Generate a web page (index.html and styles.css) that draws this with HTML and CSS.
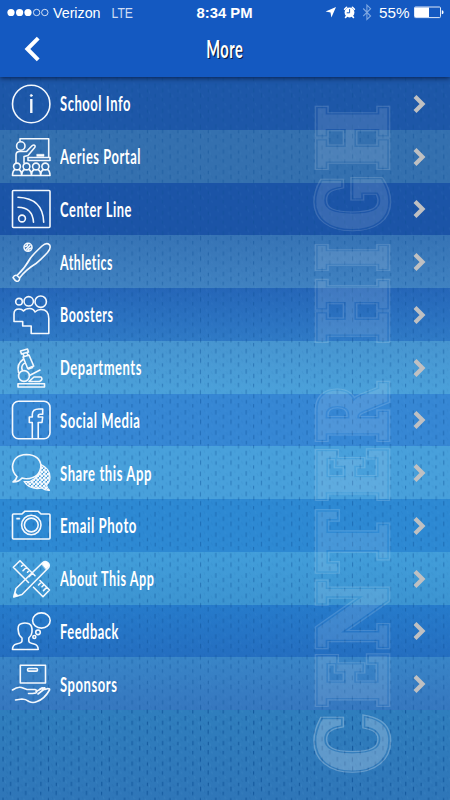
FILE: index.html
```
<!DOCTYPE html>
<html lang="en">
<head>
<meta charset="utf-8">
<title>More</title>
<link rel="stylesheet" href="styles.css">
</head>
<body>
<main class="screen">
  <header class="header">
    <div class="status">
      <svg class="status-art" viewBox="0 0 450 25">
        <g fill="#fff"><circle cx="11" cy="12.5" r="3.6"/><circle cx="19.6" cy="12.5" r="3.6"/><circle cx="28" cy="12.5" r="3.6"/></g>
        <g fill="none" stroke="#fff" stroke-width=".8"><circle cx="36.6" cy="12.5" r="3.2"/><circle cx="44.8" cy="12.5" r="3.2"/></g>
        <g class="status-text">
          <text x="53" y="17.5" textLength="47.5">Verizon</text>
          <text class="thin" x="111.5" y="17.5" textLength="21.5" lengthAdjust="spacingAndGlyphs">LTE</text>
          <text class="strong" x="196.5" y="17.5" textLength="56" lengthAdjust="spacingAndGlyphs">8:34 PM</text>
          <text x="379" y="17.5" textLength="30.5" lengthAdjust="spacingAndGlyphs">55%</text>
        </g>
        <path fill="#fff" d="M336 7l-4.6 10.4-.9-4.9-4.9-.9z"/>
        <g fill="none" stroke="#fff" stroke-linecap="round">
          <circle cx="349.5" cy="12.5" r="4.9" fill="#fff" stroke="none"/>
          <path stroke-width="1.6" d="M344.6 9.3l2-2M354.4 9.3l-2-2M346.3 16.6l-.8.9M352.7 16.6l.8.9"/>
          <path stroke="#1459c1" stroke-width="1" d="M349.6 9.5v3.3h-2.500"/>
        </g>
        <path fill="none" stroke="#7fa8e2" stroke-width="1.1" d="M363.2 8.5l7.4 7.5-3.7 3.5V5l3.7 3.7-7.4 7.4"/>
        <rect x="414.5" y="7" width="26" height="10.6" rx="1" fill="none" stroke="#dfe9f8"/>
        <path fill="#fff" d="M415 7.5h14v9.6h-14zM441.8 10.3q1.8 0 1.8 2t-1.8 2z"/>
      </svg>
    </div>
    <div class="nav">
      <svg class="nav-art" viewBox="0 0 450 52">
        <path fill="none" stroke="#fff" stroke-width="4" d="M38.2 13.2L27.4 24l10.8 10.8"/>
        <text class="title title-shadow" x="207.4" y="34.2" textLength="37" lengthAdjust="spacingAndGlyphs" aria-hidden="true">More</text>
        <text class="title" x="206.2" y="33" textLength="37" lengthAdjust="spacingAndGlyphs">More</text>
      </svg>
    </div>
  </header>

  <svg class="artwork" viewBox="0 0 450 800" aria-hidden="true">
    <defs>
      <pattern id="mesh" width="30.4" height="20.4" patternUnits="userSpaceOnUse">
        <path class="mesh-dark" d="M3 2v4.5M3.2 12.5v3.5M10.6 6.5v4.5M10.4 16.5v3.5M18 2.5v4.5M18.2 11.5v4.5M25.9 7.5v3.5M25.7 15.5v4.5"/>
        <path class="mesh-soft" d="M6 1l1.5 3M6 9l1 3M6.5 16l1.5 3M13.5 4l1.5 3M14 13l1 3M21.5 1l1 3M21 9l1.5 3M22 16l1 2M28.5 4l1.5 3M28.5 12l1.5 3"/>
        <path class="mesh-light" d="M4.6 5l1 3M8.6 12l1 3M12 1l1 3M16 8l1 3M20 13l1 3M23.7 3l1 3M27.5 9l.6 3M29 17l1 2"/>
      </pattern>
      <g id="l-c" transform="translate(385.5 772.5) rotate(-90)"><text textLength="57.500" lengthAdjust="spacingAndGlyphs">C</text></g>
      <g id="l-rest">
        <g transform="translate(385.5 707) rotate(-90)"><text textLength="54" lengthAdjust="spacingAndGlyphs">E</text></g>
        <g transform="translate(385.5 649) rotate(-90)"><text textLength="69" lengthAdjust="spacingAndGlyphs">N</text></g>
        <g transform="translate(385.5 571) rotate(-90)"><text textLength="59" lengthAdjust="spacingAndGlyphs">T</text></g>
        <g transform="translate(385.5 501) rotate(-90)"><text textLength="53" lengthAdjust="spacingAndGlyphs">E</text></g>
        <g transform="translate(385.5 442) rotate(-90)"><text textLength="57.500" lengthAdjust="spacingAndGlyphs">R</text></g>
        <g transform="translate(385.5 343) rotate(-90)"><text textLength="64" lengthAdjust="spacingAndGlyphs">H</text></g>
        <g transform="translate(385.5 271) rotate(-90)"><text textLength="27" lengthAdjust="spacingAndGlyphs">I</text></g>
        <g transform="translate(385.5 231) rotate(-90)"><text textLength="56" lengthAdjust="spacingAndGlyphs">G</text></g>
        <g transform="translate(385.5 170) rotate(-90)"><text textLength="64" lengthAdjust="spacingAndGlyphs">H</text></g>
      </g>
      <mask id="m-c" maskUnits="userSpaceOnUse" x="0" y="0" width="450" height="800">
        <use href="#l-c" class="ring-out"/><use href="#l-c" class="ring-gap"/><use href="#l-c" class="core"/>
      </mask>
      <mask id="m-rest" maskUnits="userSpaceOnUse" x="0" y="0" width="450" height="800">
        <use href="#l-rest" class="ring-out"/><use href="#l-rest" class="ring-gap"/><use href="#l-rest" class="core"/>
      </mask>
    </defs>
    <rect y="77" width="450" height="633" fill="url(#mesh)" opacity=".6"/>
    <rect y="710" width="450" height="90" fill="url(#mesh)"/>
    <rect width="450" height="800" fill="#fff" opacity=".14" mask="url(#m-rest)"/>
    <rect width="450" height="800" fill="#fff" opacity=".27" mask="url(#m-c)"/>
  </svg>

  <div class="list">
    <div class="row r1"><svg class="icon" viewBox="0 0 40 40"><circle cx="20.2" cy="20" r="18.7"/><path stroke-width="2.4" stroke-linecap="butt" d="M20.3 15v14"/><circle class="solid" cx="20.3" cy="11.500" r="1.1"/></svg><svg class="label" viewBox="0 0 160 30"><text textLength="71" lengthAdjust="spacingAndGlyphs" y="22">School Info</text></svg><svg class="go" viewBox="0 0 14 20"><path d="M2 2.5L9.5 10 2 17.5"/></svg></div>
    <div class="row r2"><svg class="icon" viewBox="0 0 40 40"><path d="M9 4V1.8h28.7V20.5M17 20.5h22v3H17zM5 26V18q0-3.5 3.5-3.5h7L21 8.800q2-1.500 3 0 .5 1-.5 2L17 18.500l-4 1V26"/><path class="solid" d="M26 17.300h7v2h-7z"/><circle cx="9.800" cy="9" r="4.200"/><path d="M4 32.500q-2.500 1.500-2.500 6h37.500q0-4.500-2.500-6M8 32.500q2.500 1.500 2.700 5.500 0-4 2.700-5.500M18 32.500q2.300 1.500 2.500 5.500 0-4 2.500-5.500M27 32.500q2.700 1.500 2.700 5.500 0-4 2.700-5.500"/><circle cx="6" cy="29.500" r="3.400"/><circle cx="15.500" cy="29.500" r="3.400"/><circle cx="25" cy="29.500" r="3.400"/><circle cx="34.300" cy="29.500" r="3.400"/></svg><svg class="label" viewBox="0 0 160 30"><text textLength="81" lengthAdjust="spacingAndGlyphs" y="22">Aeries Portal</text></svg><svg class="go" viewBox="0 0 14 20"><path d="M2 2.5L9.5 10 2 17.5"/></svg></div>
    <div class="row r3"><svg class="icon" viewBox="0 0 40 40"><rect x="1.500" y="1.500" width="37.500" height="37" rx="1"/><circle cx="11" cy="29.500" r="3.400"/><path d="M7 18.300q14.500 0 15.500 15M7 8.300q25 1 25.700 25"/></svg><svg class="label" viewBox="0 0 160 30"><text textLength="72" lengthAdjust="spacingAndGlyphs" y="22">Center Line</text></svg><svg class="go" viewBox="0 0 14 20"><path d="M2 2.5L9.5 10 2 17.5"/></svg></div>
    <div class="row r4"><svg class="icon" viewBox="0 0 40 40"><circle cx="17" cy="5.300" r="4"/><path d="M14.500 4.500q2 0 2-2.500M17 9q0-2.500 3.500-3M15 7.500l4-4M6 33.500Q14 26 19.500 16 22 12.500 31 4q4.500-4 7.500-1.200 2 3-2 7.700Q29 18.500 25 21.500 15 27.500 8.500 36M2 35.500q1.500-3 4-2l2.500 2.500q.5 2.500-2 3.500Q4.500 39.500 2 35.500z"/></svg><svg class="label" viewBox="0 0 160 30"><text textLength="53" lengthAdjust="spacingAndGlyphs" y="22">Athletics</text></svg><svg class="go" viewBox="0 0 14 20"><path d="M2 2.5L9.5 10 2 17.5"/></svg></div>
    <div class="row r5"><svg class="icon" viewBox="0 0 40 40"><circle cx="8" cy="6.700" r="3.300"/><circle cx="17.700" cy="6.300" r="4.700"/><circle cx="29.700" cy="6.700" r="5.700"/><path d="M3 26.500V19q0-5 5-5 3 0 4.500 2 2-2.500 6-2.500 4 0 5.500 3.500 2.500-2.500 6-2.500 7.800 0 7.800 9v15H20.200v-7.500h-8.500v-4.500z"/></svg><svg class="label" viewBox="0 0 160 30"><text textLength="53.5" lengthAdjust="spacingAndGlyphs" y="22">Boosters</text></svg><svg class="go" viewBox="0 0 14 20"><path d="M2 2.5L9.5 10 2 17.5"/></svg></div>
    <div class="row r6"><svg class="icon" viewBox="0 0 40 40"><path d="M7 35.800h26.500v3.200H7zM9.500 3l7-2 1 3-7 2zM12 5.600l4-1.200 1 3-4 1.200zM12 9l6-2 4.700 11-6 2.500zM17.500 21l4-1.500M12 11.500Q5.500 16 7.500 24.500M13 15.500q-3.500 3-1.500 7M18.500 27.500l10.500-5.500M18 33.500l5-4.500h7q2.500 2.500-1.500 4.500z"/><circle cx="13" cy="28" r="5.400"/></svg><svg class="label" viewBox="0 0 160 30"><text textLength="82" lengthAdjust="spacingAndGlyphs" y="22">Departments</text></svg><svg class="go" viewBox="0 0 14 20"><path d="M2 2.5L9.5 10 2 17.5"/></svg></div>
    <div class="row r7"><svg class="icon" viewBox="0 0 40 40"><rect x="1.500" y="1.200" width="37.500" height="37.500" rx="6"/><path d="M21.300 38V22.500h-3v-5.500h3v-2.500q0-5.500 6.500-5.500h3.900v5.300h-2.500q-2 0-2 1.700v1h4.500l-.7 5.500h-3.800V38"/></svg><svg class="label" viewBox="0 0 160 30"><text textLength="80.5" lengthAdjust="spacingAndGlyphs" y="22">Social Media</text></svg><svg class="go" viewBox="0 0 14 20"><path d="M2 2.5L9.5 10 2 17.5"/></svg></div>
    <div class="row r8"><svg class="icon" viewBox="0 0 40 40"><defs><pattern id="dots" width="4" height="4" patternUnits="userSpaceOnUse"><circle cx="1" cy="1" r=".8" fill="#fff"/><circle cx="3" cy="3" r=".8" fill="#fff"/></pattern></defs><path fill="url(#dots)" stroke-width="1.200" d="M30 11.500q9 4 9 12.500 0 5-3.500 8 .5 3 3 5.300-5 .2-7.500-2.300-12 2.500-18-6.500h6q11-5 11-17z"/><path d="M6 23.500q-4.500-4-4.500-10Q2.500 2 15.500 1.500 29 2 30 13 29 25 15.500 25.800q-2 0-4.500-.7-3 4-9 3.900Q5.500 26.500 6 23.500z"/></svg><svg class="label" viewBox="0 0 160 30"><text textLength="92" lengthAdjust="spacingAndGlyphs" y="22">Share this App</text></svg><svg class="go" viewBox="0 0 14 20"><path d="M2 2.5L9.5 10 2 17.5"/></svg></div>
    <div class="row r9"><svg class="icon" viewBox="0 0 40 40"><path d="M1.500 9q0-1 1-1H11l3-2.800h13L30 8h8q1 0 1 1v23q0 1-1 1H2.500q-1 0-1-1z"/><circle cx="20.300" cy="19" r="9.700"/><circle cx="20.300" cy="19" r="6.900"/><path class="solid" d="M5.800 12h3v1.200h-3z"/></svg><svg class="label" viewBox="0 0 160 30"><text textLength="77" lengthAdjust="spacingAndGlyphs" y="22">Email Photo</text></svg><svg class="go" viewBox="0 0 14 20"><path d="M2 2.5L9.5 10 2 17.5"/></svg></div>
    <div class="row r10"><svg class="icon" viewBox="0 0 40 40"><path d="M17.500 23.500L2.300 8.300 9 1.700 24 16.700M29 21.500L38.500 31 32 37.700 22.500 28.200M12.500 5.200L10.500 7.200M15.500 8.200l-3.500 3.500M18.500 11.200l-2 2M21.500 14.200L18 17.700M30.500 23l-3 3M33 25.700l-2 2M35.800 28.300l-3.300 3.300"/><path d="M5 29.500L31.500 3.800q3-2.500 5.500 0t0 5.500L11 35.500 2.800 38z"/><path class="solid" d="M30.500 4.800l2.500-1.800q3-1 4.500 1.500t-1 4.200l-1.500 1.500zM4 33.500l3.500 3.300-4.500 1z"/></svg><svg class="label" viewBox="0 0 160 30"><text textLength="94.5" lengthAdjust="spacingAndGlyphs" y="22">About This App</text></svg><svg class="go" viewBox="0 0 14 20"><path d="M2 2.5L9.5 10 2 17.5"/></svg></div>
    <div class="row r11"><svg class="icon" viewBox="0 0 40 40"><path d="M1.500 38.500q0-4.500 4-5.500 5.500-1.200 5.500-3v-3q-3.500-3-3.500-6Q6 14 10 12.800q4-1.500 8 0 3.500 1.500 3 8.200 0 3-3.200 6v3q0 1.800 5.200 3 4.200 1 4.200 5.500z"/><ellipse cx="30.400" cy="9.500" rx="8.800" ry="7.600"/><circle cx="27" cy="21.300" r="2.300"/><circle cx="23.300" cy="26" r="1.500"/></svg><svg class="label" viewBox="0 0 160 30"><text textLength="59" lengthAdjust="spacingAndGlyphs" y="22">Feedback</text></svg><svg class="go" viewBox="0 0 14 20"><path d="M2 2.5L9.5 10 2 17.5"/></svg></div>
    <div class="row r12"><svg class="icon" viewBox="0 0 40 40"><rect x="9.300" y="1.300" width="25.200" height="17.700"/><rect x="16.500" y="4.500" width="10" height="2.600" rx="1.200"/><path d="M1.500 26q5-3.500 9-2.500l5.500 2h8q3 1 1.500 2.800-1.500 1.400-8 1.200M25 27.500l7-3.500q2-.5 2 .5l-7 5.500M29 25l1.500-.9q2-.7 1.500.6M34 25.500l3-1q2 0 1.500 1.500-5 9-12.500 11.500-4 2-8 0-3.500-2.500-7-2.500l-6.500 1"/></svg><svg class="label" viewBox="0 0 160 30"><text textLength="57.5" lengthAdjust="spacingAndGlyphs" y="22">Sponsors</text></svg><svg class="go" viewBox="0 0 14 20"><path d="M2 2.5L9.5 10 2 17.5"/></svg></div>
  </div>
</main>
</body>
</html>
```
FILE: styles.css
```
body { margin: 0; }

.screen {
  position: relative;
  width: 450px;
  height: 800px;
  overflow: hidden;
  background: linear-gradient(#2f7ebd 0, #2f7ebd 710px, #2f76b8 800px);
}

.header {
  position: relative;
  z-index: 3;
  height: 77px;
  background: #1459c1;
  box-shadow: 0 1px 5px rgba(0, 15, 50, .8);
}
.status { height: 25px; }
.nav { height: 52px; }
.status-art, .nav-art { display: block; width: 100%; height: 100%; }
.status-text {
  fill: #fff;
  font: 14.3px "Liberation Sans", Arial, sans-serif;
}
.thin { fill: #cfddf4; }
.strong { font-weight: bold; }
.title { font: bold 24px Lato, sans-serif; fill: #fff; letter-spacing: .8px; }
.title-shadow { fill: #081c44; }

.artwork {
  position: absolute;
  z-index: 1;
  top: 0;
  left: 0;
  width: 450px;
  height: 800px;
  font: bold 91px "DejaVu Serif", serif;
  pointer-events: none;
}
.mesh-dark { fill: none; stroke: #0c4f94; stroke-width: 1.1; opacity: .75; }
.mesh-soft { fill: none; stroke: #0c4f94; stroke-width: 1; opacity: .15; }
.mesh-light { fill: none; stroke: #6ab4e8; stroke-width: 1; opacity: .12; }
.ring-out { fill: #fff; stroke: #fff; stroke-width: 8.6; }
.ring-gap { fill: #222; stroke: #222; stroke-width: 5.8; }
.core { fill: #ddd; stroke: #ddd; stroke-width: 2.4; }

.list { display: flex; flex-direction: column; }
.row {
  display: flex;
  align-items: center;
  height: 52.75px;
  box-sizing: border-box;
  padding: 1px 23px 0 11px;
}
.icon, .label, .go { position: relative; z-index: 2; flex: none; }
.icon {
  width: 40px;
  height: 40px;
  fill: none;
  stroke: #f4f8fd;
  stroke-width: 1.6;
  stroke-linejoin: round;
  stroke-linecap: round;
}
.solid { fill: #fff; stroke-width: .6; }
.label {
  width: 160px;
  height: 30px;
  margin-left: 9px;
  padding-top: 1px;
  fill: #fff;
  font: bold 20.5px Lato, sans-serif;
  letter-spacing: .9px;
}
.go {
  width: 14px;
  height: 20px;
  margin-left: auto;
  margin-right: 0;
  fill: none;
  stroke: #bfc0c2;
  stroke-width: 4.2;
}

.r1 { background: #1d57a8; }
.r2 { background: #3470af; }
.r3 { background: #1b54a7; }
.r4 { background: linear-gradient(#3673b5, #4082c1); }
.r5 { background: linear-gradient(#2566b8, #2f7ac6); }
.r6 { background: linear-gradient(#4795d0, #4ba1da); }
.r7 { background: #3687d4; }
.r8 { background: #48a0db; }
.r9 { background: #2d89d3; }
.r10 { background: linear-gradient(#429eda, #3c94d1); }
.r11 { background: linear-gradient(#267bcb, #246ec0); }
.r12 { background: linear-gradient(#3985c7, #3677bf); }
```
